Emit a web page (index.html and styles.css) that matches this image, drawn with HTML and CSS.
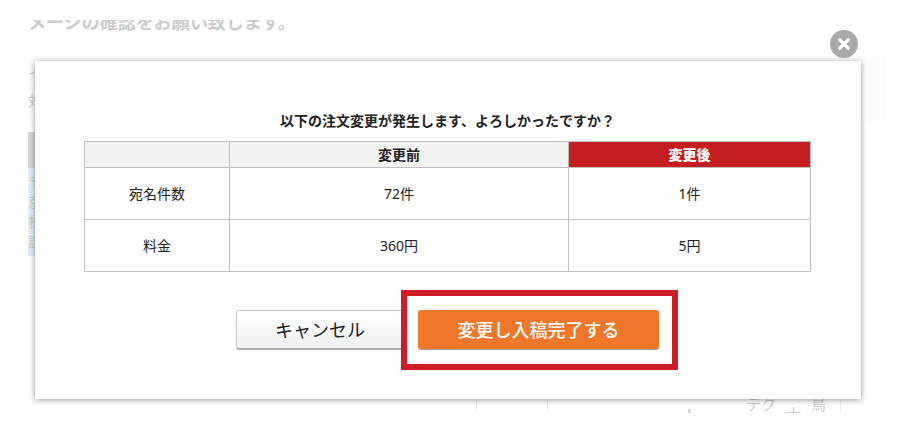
FILE: index.html
```html
<!DOCTYPE html>
<html lang="ja">
<head>
    <meta charset="UTF-8">
    <title>注文変更の確認</title>
    <link rel="stylesheet" href="styles.css">
</head>
<body>
    <div class="page" aria-hidden="true">
        <p class="lead">メージの確認をお願い致します。</p>
        <div class="note">
            <p>イ</p>
            <p>対</p>
        </div>
        <div class="list">
            <div class="list-head"></div>
            <ul>
                <li>〒</li>
                <li>京</li>
                <li>株</li>
                <li>課</li>
            </ul>
        </div>
        <div class="preview">
            <div class="preview-side"></div>
            <div class="preview-card">
                <span class="low bar">ー</span>
                <span>テク</span>
                <span class="low">士</span>
                <span>鳥</span>
            </div>
        </div>
    </div>
    <div class="modal" role="dialog" aria-labelledby="title">
        <button type="button" class="close" aria-label="閉じる">
            <svg viewBox="0 0 28 28" width="28" height="28">
                <circle cx="14" cy="14" r="14" fill="#a9a9a9"/>
                <path d="M9.8 9.8L18.2 18.2M18.2 9.8L9.8 18.2" stroke="#fff" stroke-width="3.2" stroke-linecap="round"/>
            </svg>
        </button>
        <h1 id="title">以下の注文変更が発生します、よろしかったですか？</h1>
        <table>
            <thead>
                <tr>
                    <th class="col-name"></th>
                    <th>変更前</th>
                    <th class="col-after">変更後</th>
                </tr>
            </thead>
            <tbody>
                <tr>
                    <td>宛名件数</td>
                    <td>72件</td>
                    <td>1件</td>
                </tr>
                <tr>
                    <td>料金</td>
                    <td>360円</td>
                    <td>5円</td>
                </tr>
            </tbody>
        </table>
        <div class="buttons">
            <button type="button" class="btn cancel">キャンセル</button>
            <div class="mark">
                <button type="button" class="btn submit">変更し入稿完了する</button>
            </div>
        </div>
    </div>
</body>
</html>
```

FILE: styles.css
```css
* {
    margin: 0;
    padding: 0;
    box-sizing: border-box;
}
body{
    position: relative;
    display: flow-root;
    min-height: 100vh;
    background-color: #fefefe;
    color: #222;
    font-family: "Noto Sans", "Noto Sans CJK JP", sans-serif;
    font-size: 14px;
}

/* faded page under the dialog */
.page{
    position: absolute;
    top: 20px;
    right: 28px;
    bottom: 21px;
    left: 28px;
    display: flex;
    flex-direction: column;
    overflow: hidden;
    color: #ccc;
}
.lead{
    height: 33px;
    margin-top: -10px;
    margin-bottom: 10px;
    font-size: 18px;
    font-weight: bold;
    line-height: 24px;
}
.note{
    height: 69px;
    padding-top: 6px;
    background-color: #fcfcfc;
    line-height: 28px;
}
.list{
    width: 200px;
    margin-top: 10px;
}
.list-head{
    height: 36px;
    background-color: #d6d6d6;
}
.list ul{
    height: 88px;
    padding-top: 4px;
    background-color: #e0f0f6;
    list-style: none;
    line-height: 20px;
}
.preview{
    flex: 1;
    display: flex;
    justify-content: flex-end;
    margin-right: 45px;
}
.preview-side{
    width: 71px;
    border-left: 1px solid #eee;
}
.preview-card{
    display: flex;
    align-items: flex-end;
    justify-content: flex-end;
    gap: 10px;
    width: 294px;
    padding-right: 14px;
    border-left: 1px solid #eee;
    border-right: 1px solid #eee;
    font-family: "Noto Sans CJK JP", sans-serif;
    font-size: 15px;
    line-height: 18px;
}
.low{
    margin-bottom: -10px;
}
.bar{
    margin-right: 38px;
    font-weight: bold;
    writing-mode: vertical-rl;
}

/* dialog */
.modal{
    position: relative;
    margin: 61px 53px 35px 35px;
    padding: 50px 50px 49px 49px;
    background-color: #fefefe;
    box-shadow: 0 1px 6px rgba(0, 0, 0, 0.4);
}
.close{
    position: absolute;
    top: -31px;
    right: 3px;
    width: 28px;
    height: 28px;
    border: none;
    background: none;
    cursor: pointer;
}
.close svg{
    display: block;
}
h1{
    margin-bottom: 10px;
    font-size: 14px;
    line-height: 20px;
    text-align: center;
}
table{
    width: 100%;
    border-collapse: collapse;
    table-layout: fixed;
    line-height: 20px;
    text-align: center;
}
th,
td{
    border: 1px solid #bfbfbf;
}
th{
    height: 26px;
    background-color: #f3f3f1;
}
td{
    height: 52px;
}
.col-name{
    width: 20%;
}
.col-after{
    width: calc(100% / 3);
    background-color: #c41e20;
    color: #fff;
    font-weight: 900;
}
.buttons{
    display: flex;
    justify-content: center;
    gap: 14px;
    margin-top: 38px;
}
.btn{
    height: 40px;
    border-radius: 3px;
    font-family: inherit;
    font-size: 18px;
    line-height: 24px;
    cursor: pointer;
}
.cancel{
    width: 168px;
    border: 1px solid #c8c8c8;
    border-bottom: 2px solid #aaa;
    background: linear-gradient(#fff, #eef0f1);
    color: #222;
}
.submit{
    width: 241px;
    border: none;
    border-bottom: 1px solid #b0a09a;
    background-color: #ef772c;
    color: #fff;
    font-weight: 500;
}

/* red frame around the main button */
.mark{
    position: relative;
}
.mark::after{
    content: "";
    position: absolute;
    top: -20px;
    right: -19px;
    bottom: -20px;
    left: -17px;
    border: 6px solid #d01c24;
    pointer-events: none;
}
```
